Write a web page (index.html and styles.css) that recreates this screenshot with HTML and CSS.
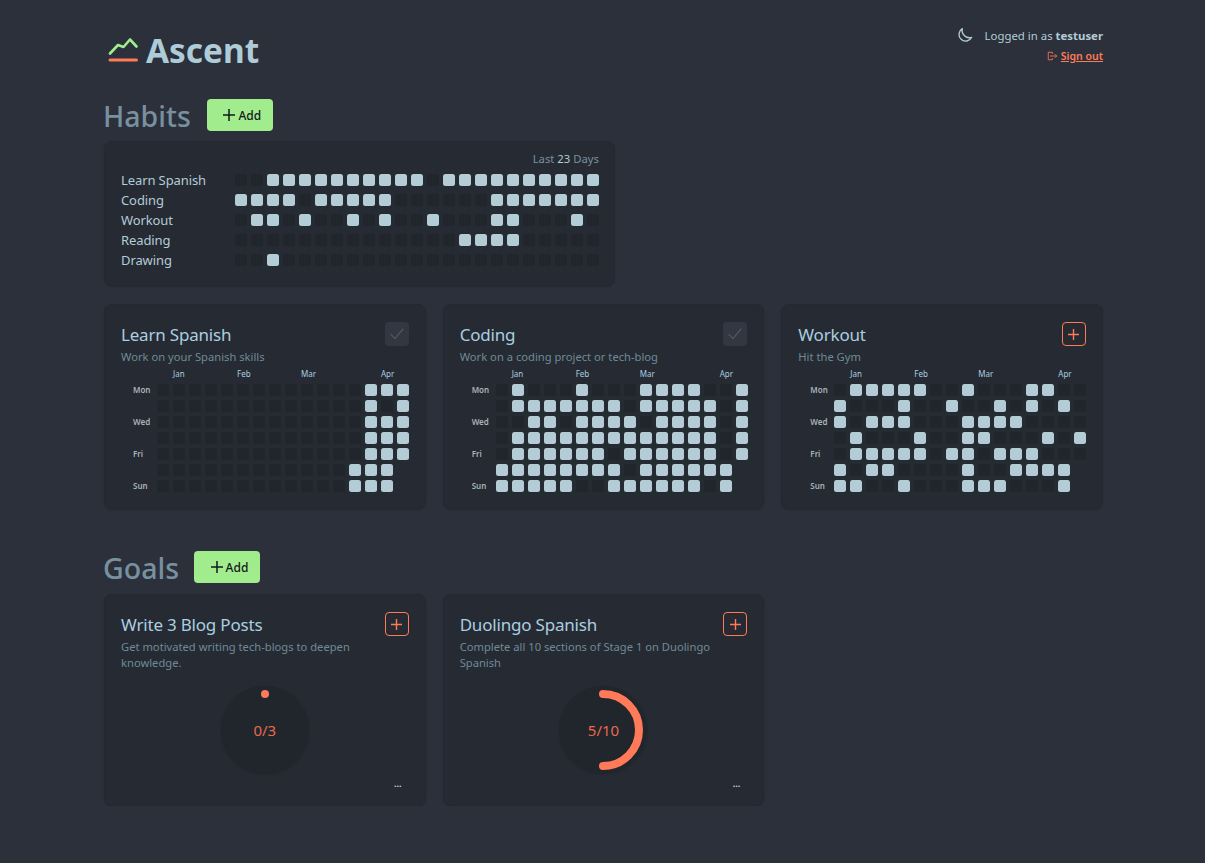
FILE: index.html
```html
<!DOCTYPE html>
<html lang="en">
<head>
    <meta charset="UTF-8">
    <meta name="viewport" content="width=device-width, initial-scale=1.0">
    <title>Ascent</title>
    <link rel="stylesheet" href="styles.css">
</head>
<body>
<div class="page">

    <header class="topbar">
        <div class="brand">
            <svg class="brand-icon" width="30" height="28" viewBox="0 0 30 28" fill="none">
                <polyline points="2,18.5 10,10 15.5,12 22,4.5 28.5,11.5" stroke="#a1ec8d" stroke-width="2.6" stroke-linecap="round" stroke-linejoin="round"/>
                <line x1="2" y1="25" x2="28.5" y2="25" stroke="#ff7a59" stroke-width="3" stroke-linecap="round"/>
            </svg>
            <span class="brand-name">Ascent</span>
        </div>
        <div class="account">
            <div class="account-line">
                <svg class="moon" width="16" height="16" viewBox="0 0 24 24" fill="none" stroke="#b3ccd6" stroke-width="2" stroke-linecap="round" stroke-linejoin="round">
                    <path d="M8 2.5a10 10 0 1 0 14 13A11 11 0 0 1 8 2.5z"/>
                </svg>
                <span>Logged in as <b>testuser</b></span>
            </div>
            <a class="signout" href="#">
                <svg width="10" height="10" viewBox="0 0 12 12" fill="none" stroke="#ff7a59" stroke-width="1" stroke-linecap="round" stroke-linejoin="round">
                    <path d="M6.5 3V1.5h-5v9h5V9"/>
                    <path d="M4 6h7.5M9.8 4.2 11.5 6 9.8 7.8"/>
                </svg>
                <span>Sign out</span>
            </a>
        </div>
    </header>

    <div class="section-head habits-head">
        <h2>Habits</h2>
        <button class="add-btn"><svg width="12" height="12" viewBox="0 0 12 12" stroke="#14181f" stroke-width="1.5"><path d="M6 0v12M0 6h12"/></svg>Add</button>
    </div>

    <section class="card summary">
        <div class="summary-range">Last <span>23</span> Days</div>
        <div class="summary-grid" id="summaryGrid"></div>
    </section>

    <div class="card-grid habit-cards">
        <section class="card">
            <div class="card-head">
                <div>
                    <h3>Learn Spanish</h3>
                    <p>Work on your Spanish skills</p>
                </div>
                <button class="done-btn"><svg width="14" height="12" viewBox="0 0 14 12" fill="none" stroke="#4f5561" stroke-width="1.2" stroke-linecap="round" stroke-linejoin="round"><path d="M1 6.5l4 4L13 1"/></svg></button>
            </div>
            <div class="heatmap" data-habit="spanish"></div>
        </section>
        <section class="card">
            <div class="card-head">
                <div>
                    <h3>Coding</h3>
                    <p>Work on a coding project or tech-blog</p>
                </div>
                <button class="done-btn"><svg width="14" height="12" viewBox="0 0 14 12" fill="none" stroke="#4f5561" stroke-width="1.2" stroke-linecap="round" stroke-linejoin="round"><path d="M1 6.5l4 4L13 1"/></svg></button>
            </div>
            <div class="heatmap" data-habit="coding"></div>
        </section>
        <section class="card">
            <div class="card-head">
                <div>
                    <h3>Workout</h3>
                    <p>Hit the Gym</p>
                </div>
                <button class="plus-btn"><svg width="11" height="11" viewBox="0 0 11 11" stroke="#ff7a59" stroke-width="1.4"><path d="M5.5 0v11M0 5.5h11"/></svg></button>
            </div>
            <div class="heatmap" data-habit="workout"></div>
        </section>
    </div>

    <div class="section-head goals-head">
        <h2>Goals</h2>
        <button class="add-btn"><svg width="12" height="12" viewBox="0 0 12 12" stroke="#14181f" stroke-width="1.5"><path d="M6 0v12M0 6h12"/></svg>Add</button>
    </div>

    <div class="card-grid">
        <section class="card goal">
            <div class="card-head">
                <div>
                    <h3>Write 3 Blog Posts</h3>
                    <p>Get motivated writing tech-blogs to deepen knowledge.</p>
                </div>
                <button class="plus-btn"><svg width="11" height="11" viewBox="0 0 11 11" stroke="#ff7a59" stroke-width="1.4"><path d="M5.5 0v11M0 5.5h11"/></svg></button>
            </div>
            <div class="ring">
                <svg width="88" height="88" viewBox="0 0 88 88" fill="none">
                    <circle cx="44" cy="8" r="4" fill="#ff7a59"/>
                </svg>
                <span class="ring-label">0/3</span>
            </div>
            <div class="more">...</div>
        </section>
        <section class="card goal">
            <div class="card-head">
                <div>
                    <h3>Duolingo Spanish</h3>
                    <p>Complete all 10 sections of Stage 1 on Duolingo Spanish</p>
                </div>
                <button class="plus-btn"><svg width="11" height="11" viewBox="0 0 11 11" stroke="#ff7a59" stroke-width="1.4"><path d="M5.5 0v11M0 5.5h11"/></svg></button>
            </div>
            <div class="ring">
                <svg width="88" height="88" viewBox="0 0 88 88" fill="none">
                    <path d="M44 8a36 36 0 0 1 0 72" stroke="#ff7a59" stroke-width="8" stroke-linecap="round"/>
                </svg>
                <span class="ring-label">5/10</span>
            </div>
            <div class="more">...</div>
        </section>
    </div>

</div>

<script>
    // 1 = done, 0 = missed, space = day still to come
    var habits = {
        spanish: [
            "0000000000000111",
            "0000000000000101",
            "0000000000000111",
            "0000000000000111",
            "0000000000000111",
            "000000000000111 ",
            "000000000000111 "
        ],
        coding: [
            "0100010001111001",
            "0111111101111101",
            "0011011110111101",
            "0111111111111101",
            "0111111011111101",
            "111111110111111 ",
            "111110011111101 "
        ],
        workout: [
            "0111110010001100",
            "1000100100101010",
            "1011100011110000",
            "0100010011000101",
            "0111110110111000",
            "101100001001111 ",
            "110010001110001 "
        ]
    };

    var summary = [
        ["Learn Spanish", "00111111111101111111111"],
        ["Coding",        "11110111110000001111111"],
        ["Workout",       "01101001010010001100010"],
        ["Reading",       "00000000000000111100000"],
        ["Drawing",       "00100000000000000000000"]
    ];

    var months = { Jan: 1, Feb: 5, Mar: 9, Apr: 14 };
    var days = ["Mon", "", "Wed", "", "Fri", "", "Sun"];

    function makeCell(value) {
        var cell = document.createElement("div");
        if (value === "1") cell.className = "cell on";
        else if (value === "0") cell.className = "cell";
        return cell;
    }

    var summaryGrid = document.getElementById("summaryGrid");
    summary.forEach(function (row) {
        var label = document.createElement("div");
        label.className = "summary-label";
        label.textContent = row[0];
        summaryGrid.appendChild(label);
        row[1].split("").forEach(function (value) {
            summaryGrid.appendChild(makeCell(value));
        });
    });

    document.querySelectorAll(".heatmap").forEach(function (map) {
        var monthRow = document.createElement("div");
        monthRow.className = "heat-row";
        Object.keys(months).forEach(function (name) {
            var month = document.createElement("div");
            month.className = "month";
            month.textContent = name;
            month.style.gridColumn = (months[name] + 2) + " / span 3";
            monthRow.appendChild(month);
        });
        map.appendChild(monthRow);

        habits[map.dataset.habit].forEach(function (row, i) {
            var line = document.createElement("div");
            line.className = "heat-row";
            var day = document.createElement("div");
            day.className = "day";
            day.textContent = days[i];
            line.appendChild(day);
            row.split("").forEach(function (value) {
                line.appendChild(makeCell(value));
            });
            map.appendChild(line);
        });
    });
</script>
</body>
</html>
```

FILE: styles.css
```css
* {
    box-sizing: border-box;
}
body {
    margin: 0;
    background: #2b303b;
    font-family: "Noto Sans", "Open Sans", sans-serif;
    color: #b3ccd6;
}
h2, h3, p {
    margin: 0;
    font-weight: 400;
}
button {
    font-family: inherit;
    cursor: pointer;
}
.page {
    width: 999px;
    margin-left: 104px;
}

/* header */
.topbar {
    display: flex;
    justify-content: space-between;
    height: 99px;
    padding-top: 25px;
}
.brand {
    display: flex;
    align-items: flex-start;
    gap: 8px;
    padding-left: 4px;
}
.brand-icon {
    margin-top: 10px;
}
.brand-name {
    font-size: 33.4px;
    font-weight: 700;
    line-height: 50px;
    color: #aecbd8;
}
.account {
    display: flex;
    flex-direction: column;
    align-items: flex-end;
    font-size: 11.4px;
    color: #b3ccd6;
}
.account-line {
    display: flex;
    align-items: center;
    gap: 12px;
    height: 20px;
    margin-bottom: 4px;
}
.account-line b {
    font-weight: 700;
}
.signout {
    display: flex;
    align-items: center;
    gap: 4px;
    font-size: 10.5px;
    font-weight: 600;
    color: #ff7a59;
    text-decoration: underline;
}

/* section headings */
.section-head {
    display: flex;
    align-items: center;
    gap: 16px;
    height: 32px;
}
.section-head h2 {
    margin-left: -1px;
    padding-top: 2px;
    font-size: 28.5px;
    font-weight: 500;
    color: #78909f;
}
.habits-head {
    margin-bottom: 10px;
}
.goals-head {
    gap: 15px;
    margin-top: 42px;
    margin-bottom: 11px;
}
.add-btn {
    display: flex;
    align-items: center;
    justify-content: center;
    gap: 3px;
    width: 66px;
    height: 32px;
    padding: 0 0 0 5px;
    border: none;
    border-radius: 4px;
    background: #a1ec8d;
    color: #14181f;
    font-size: 12px;
    font-weight: 500;
}

/* cards */
.card {
    position: relative;
    background: #262a33;
    border: 1px solid #242831;
    border-radius: 8px;
    padding: 17px 16px;
    box-shadow: 0 1px 2px rgba(0, 0, 0, 0.15);
}
.summary {
    width: 511px;
    height: 145px;
    margin-bottom: 18px;
    padding-top: 9px;
}
.summary-range {
    margin-right: -1px;
    text-align: right;
    font-size: 11.3px;
    line-height: 16px;
    color: #78909f;
}
.summary-range span {
    color: #b3ccd6;
}
.summary-grid {
    display: grid;
    grid-template-columns: 110px repeat(23, 12px);
    grid-auto-rows: 12px;
    column-gap: 4px;
    row-gap: 8px;
    margin-top: 7px;
}
.summary-label {
    font-size: 13px;
    letter-spacing: -0.1px;
    line-height: 12px;
    color: #b3ccd6;
    white-space: nowrap;
}
.cell {
    width: 12px;
    height: 12px;
    border-radius: 2.5px;
    background: #21252c;
}
.cell.on {
    background: #b3ccd6;
}
.card-grid {
    display: grid;
    grid-template-columns: repeat(3, minmax(0, 1fr));
    gap: 17px;
}
.habit-cards .card {
    height: 205px;
}
.card-head {
    display: flex;
    justify-content: space-between;
    align-items: flex-start;
    gap: 4px;
}
.card h3 {
    font-size: 17px;
    letter-spacing: -0.2px;
    line-height: 25px;
    color: #a9cfe0;
}
.card p {
    margin-top: 2px;
    font-size: 11.2px;
    line-height: 16px;
    color: #6f8a96;
}
.done-btn, .plus-btn {
    flex: none;
    display: flex;
    align-items: center;
    justify-content: center;
    width: 24px;
    height: 24px;
    padding: 0;
    border-radius: 4px;
}
.done-btn {
    border: none;
    background: #323742;
}
.plus-btn {
    border: 1px solid #ff7a59;
    background: transparent;
}

/* heatmap */
.heatmap {
    display: flex;
    flex-direction: column;
    gap: 4px;
    margin-top: 3px;
    padding-left: 12px;
}
.heat-row {
    display: grid;
    grid-template-columns: 20px repeat(16, 12px);
    grid-auto-rows: 12px;
    column-gap: 4px;
}
.month {
    font-size: 8px;
    line-height: 12px;
    white-space: nowrap;
    color: #a9cfe0;
}
.day {
    font-size: 8px;
    line-height: 12px;
    font-weight: 600;
    color: #a9b4bb;
}

/* goals */
.goal {
    height: 212px;
}
.ring {
    position: relative;
    width: 88px;
    height: 88px;
    margin: 15px auto 0;
    border-radius: 50%;
    background: #21252c;
    box-shadow: 0 1px 3px rgba(0, 0, 0, 0.1);
    display: flex;
    align-items: center;
    justify-content: center;
}
.ring svg {
    position: absolute;
    left: 0;
    top: 0;
}
.ring-label {
    font-size: 15px;
    color: #e8694c;
}
.more {
    position: absolute;
    right: 23px;
    bottom: 17px;
    font-size: 9px;
    line-height: 9px;
    font-weight: 700;
    color: #c9d3da;
}
```
